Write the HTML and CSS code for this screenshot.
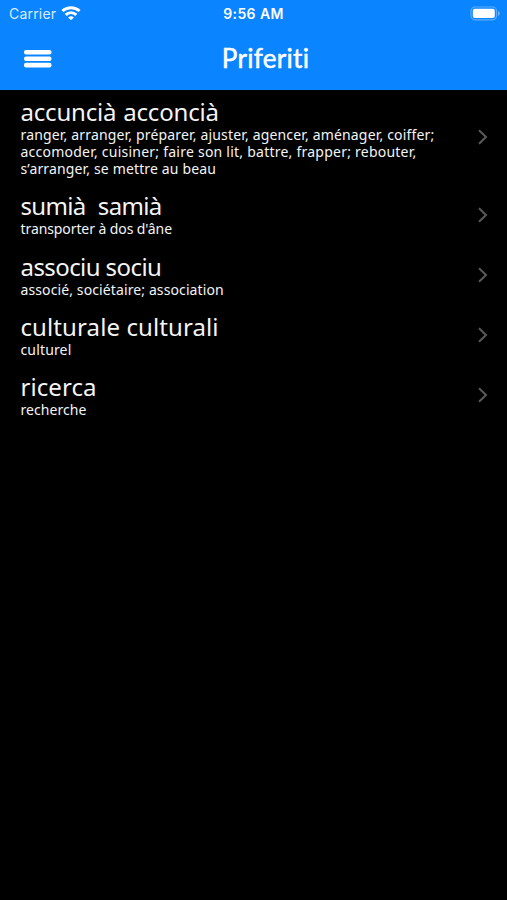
FILE: index.html
```
<!DOCTYPE html>
<html lang="co">
<head>
<meta charset="utf-8">
<title>Priferiti</title>
<link rel="stylesheet" href="styles.css">
</head>
<body>
<header class="top">
  <div class="status">
    <div class="carrier"><span>Carrier</span>
      <svg class="wifi" width="20" height="15" viewBox="0 0 20 15" fill="none" stroke="#fff" stroke-width="3"><path d="M1.400 5C6.300.6 13.700.6 18.600 5"/><path d="M4.700 8.800C7.900 5.900 12.100 5.900 15.300 8.800"/><path d="M10 14.300 7.100 11.400Q10 9.200 12.900 11.400Z" fill="#fff" stroke="none"/></svg>
    </div>
    <div class="time"><span>9:56 AM</span></div>
    <div class="power"><svg width="31" height="15" viewBox="0 0 31 15"><rect x="1" y="1" width="25.500" height="12.800" rx="4" fill="none" stroke="#5eadff" stroke-width="1.200"/><rect x="2.800" y="2.800" width="22" height="9.200" rx="2" fill="#fff"/><path d="M28 5v5q1.800-.8 1.800-2.500T28 5Z" fill="#6cb5ff"/></svg></div>
  </div>
  <nav class="bar">
    <svg class="menu" width="28" height="18" viewBox="0 0 28 18" fill="#fff"><rect width="27.500" height="4.600" rx="2"/><rect y="6.400" width="27.500" height="4.600" rx="2"/><rect y="12.800" width="27.500" height="4.600" rx="2"/></svg>
    <h1><span>Priferiti</span></h1>
  </nav>
</header>
<main class="list">
  <article class="row">
    <div class="text"><h2><span class="t1">accuncià acconcià</span></h2>
      <p><span class="s1">ranger, arranger, préparer, ajuster, agencer, aménager, coiffer;</span></p>
      <p><span class="s2">accomoder, cuisiner; faire son lit, battre, frapper; rebouter,</span></p>
      <p><span class="s3">s’arranger, se mettre au beau</span></p></div>
    <svg class="chevron" viewBox="0 0 10 16"><path d="m1 1.200 7 6.800-7 6.800"/></svg>
  </article>
  <article class="row">
    <div class="text"><h2><span class="t2">sumià&nbsp; samià</span></h2><p><span class="s4">transporter à dos d'âne</span></p></div>
    <svg class="chevron" viewBox="0 0 10 16"><path d="m1 1.200 7 6.800-7 6.800"/></svg>
  </article>
  <article class="row">
    <div class="text"><h2><span class="t3">associu sociu</span></h2><p><span class="s5">associé, sociétaire; association</span></p></div>
    <svg class="chevron" viewBox="0 0 10 16"><path d="m1 1.200 7 6.800-7 6.800"/></svg>
  </article>
  <article class="row">
    <div class="text"><h2><span class="t4">culturale culturali</span></h2><p><span class="s6">culturel</span></p></div>
    <svg class="chevron" viewBox="0 0 10 16"><path d="m1 1.200 7 6.800-7 6.800"/></svg>
  </article>
  <article class="row">
    <div class="text"><h2><span class="t5">ricerca</span></h2><p><span class="s7">recherche</span></p></div>
    <svg class="chevron" viewBox="0 0 10 16"><path d="m1 1.200 7 6.800-7 6.800"/></svg>
  </article>
</main>
</body>
</html>
```
FILE: styles.css
```
* { box-sizing: border-box; }
body { margin: 0; min-height: 900px; background: #000; color: #f4f4f4; font-family: "Trebuchet MS", "Noto Sans", sans-serif; }
h1, h2, p { margin: 0; font-weight: 400; white-space: nowrap; }
svg { display: block; flex: none; }
.top { height: 90.300px; background: #0a84ff; color: #fff; }
.status { height: 27px; display: grid; grid-template-columns: 1fr auto 1fr; align-items: center; padding: 0 6px 0 9px; font: 14px/27px Inter, sans-serif; }
.carrier { display: flex; align-items: center; gap: 5px; color: #d9ecff; letter-spacing: .2px; }
.time { font-weight: 600; letter-spacing: .4px; padding-right: 3px; }
.power { justify-self: end; }
.bar { height: 63px; display: grid; grid-template-columns: 28px 1fr 4px; align-items: center; padding: 0 24px; }
.bar h1 { text-align: center; font: 400 26px/30px Lato, sans-serif; letter-spacing: .3px; padding-bottom: 2px; -webkit-text-stroke: .5px #fff; }
.list { display: flex; flex-direction: column; }
.row { display: flex; align-items: center; justify-content: space-between; padding: 7.700px 19.500px 7.500px 20.500px; }
.text h2 { font-size: 24px; line-height: 28px; }
.text p { font-size: 14px; line-height: 17.100px; }
.t1 { letter-spacing: -.2px; word-spacing: 1px; }
.t2 { letter-spacing: -.65px; word-spacing: .5px; }
.t3 { letter-spacing: -.58px; }
.t4 { letter-spacing: .1px; }
.t5 { letter-spacing: .08px; }
.s1 { letter-spacing: .165px; }
.s2 { letter-spacing: .235px; }
.s3 { letter-spacing: .15px; }
.s4 { letter-spacing: -.09px; }
.s5 { letter-spacing: .11px; }
.s6 { letter-spacing: .15px; }
.s7 { letter-spacing: .05px; }
.chevron { width: 10px; height: 16px; margin-bottom: 1px; fill: none; stroke: #5a5a5d; stroke-width: 2; }
```
